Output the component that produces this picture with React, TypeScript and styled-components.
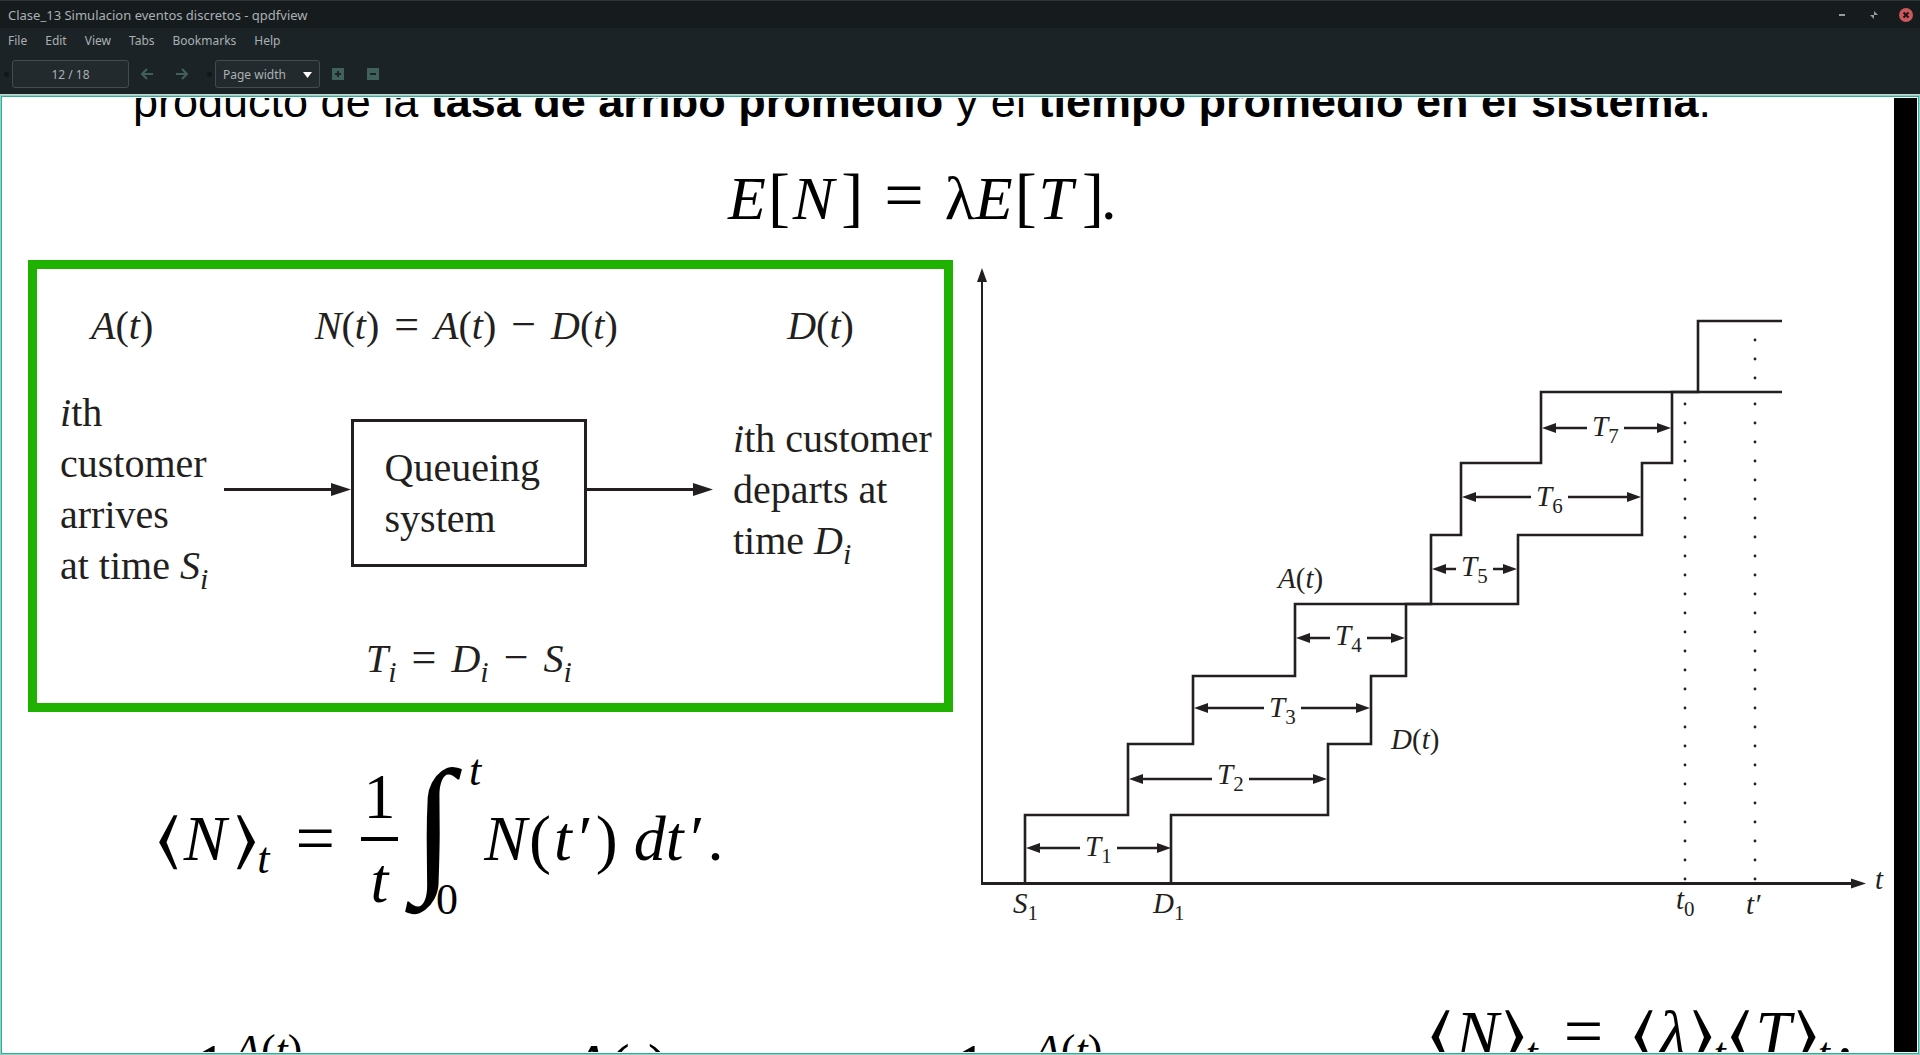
import React from "react";
import styled, { createGlobalStyle } from "styled-components";

const serif = '"Liberation Serif", "Times New Roman", serif';
const sans = '"Liberation Sans", Arial, sans-serif';
const ui = '"Noto Sans", sans-serif';
const ink = "#231f20";

const GlobalStyle = createGlobalStyle`
  *, *::before, *::after { box-sizing: border-box; }
  body { margin: 0; background: #1c2326; }
`;

/* ---------- window chrome ---------- */

const Window = styled.div`
  display: flex;
  flex-direction: column;
  height: 100vh;
  overflow: hidden;
  background: #1c2326;
  color: #a9b1b4;
  font-family: ${ui};
  font-size: 12px;
`;

const TitleBar = styled.header`
  display: flex;
  align-items: center;
  justify-content: space-between;
  height: 28px;
  padding: 0 7px 0 8px;
  border-top: 1px solid #2c3538;
  background: #161b1e;
`;

const Title = styled.h1`
  margin: 0;
  font-size: 13px;
  line-height: 26px;
  font-weight: 400;
`;

const WindowControls = styled.div`
  display: flex;
  align-items: center;
  gap: 18px;
`;

const IconButton = styled.button<{ $size: number }>`
  display: flex;
  align-items: center;
  justify-content: center;
  width: ${(p) => p.$size}px;
  height: ${(p) => p.$size}px;
  padding: 0;
  border: 0;
  background: transparent;
  color: #40605a;
`;

const MenuBar = styled.nav`
  display: flex;
  gap: 18px;
  height: 26px;
  padding: 0 8px;
`;

const MenuButton = styled.button`
  padding: 0;
  border: 0;
  background: transparent;
  color: inherit;
  font: inherit;
  line-height: 26px;
`;

const ToolBar = styled.div`
  display: flex;
  align-items: center;
  height: 40px;
  padding: 0 4px;
`;

const Grip = styled.span`
  width: 5px;
  height: 5px;
  margin-right: 3px;
  border-radius: 50%;
  background: #12171a;
`;

const PageField = styled.input`
  width: 117px;
  height: 28px;
  padding: 0;
  border: 1px solid #434b4e;
  border-radius: 3px;
  background: #232a2d;
  color: inherit;
  font: inherit;
  text-align: center;
`;

const NavGroup = styled.div`
  display: flex;
  gap: 11px;
  padding: 0 13px 0 6px;
`;

const ZoomGroup = styled(NavGroup)`
  padding: 0 6px;
`;

const SelectWrap = styled.div`
  position: relative;
`;

const ZoomSelect = styled.select`
  appearance: none;
  display: block;
  width: 105px;
  height: 28px;
  padding: 0 24px 0 7px;
  border: 1px solid #434b4e;
  border-radius: 3px;
  background: #232a2d;
  color: inherit;
  font: inherit;
`;

const SelectArrow = styled.svg`
  position: absolute;
  top: 12px;
  right: 8px;
  pointer-events: none;
`;

/* ---------- document view ---------- */

const ViewFrame = styled.main`
  flex: 1;
  min-height: 0;
  display: flex;
  border-top: 1px solid #cdd2d1;
`;

const ViewOuter = styled.div`
  flex: 1;
  display: flex;
  border: 1px solid #8fd3c6;
`;

const ViewInner = styled.div`
  flex: 1;
  display: flex;
  overflow: hidden;
  padding: 1px;
  border: 1px solid #33ab97;
  background: #fff;
`;

const PageClip = styled.div`
  flex: 1;
  display: flex;
  overflow: hidden;
`;

const Slide = styled.article`
  flex: 1;
  min-width: 0;
  margin-top: -22px;
  padding-left: 25px;
  color: #000;
  font-family: ${serif};
`;

const PageEdge = styled.div`
  width: 23px;
  background: #000;
`;

const Statement = styled.p`
  margin: 0;
  padding-left: 105px;
  font-family: ${sans};
  font-size: 45px;
  line-height: 52px;
  white-space: nowrap;
`;

const Formula = styled.div`
  display: flex;
  align-items: baseline;
  font-size: 64px;
  line-height: 72px;
  white-space: nowrap;
`;

const LittleLaw = styled(Formula)`
  padding: 34px 0 26px 700px;
  font-size: 62px;
`;

const Var = styled.i<{ $gap?: number }>`
  margin-left: ${(p) => p.$gap ?? 0}px;
`;

const Sym = styled.span<{ $gap?: number }>`
  margin-left: ${(p) => p.$gap ?? 0}px;
`;

const Bracket = styled(Sym)`
  font-size: 66px;
  line-height: 0;
`;

const Equals = styled.span<{ $wide?: boolean }>`
  margin: 0 ${(p) => (p.$wide ? 26 : 21)}px;
  font-size: 70px;
  line-height: 0;
`;

const Angle = styled(Sym)`
  font-family: "DejaVu Math TeX Gyre", "DejaVu Sans", sans-serif;
  line-height: 0;
`;

const Index = styled.sub`
  align-self: baseline;
  margin-left: -3px;
  font-size: 44px;
  font-style: italic;
  line-height: 0;
  vertical-align: -13px;
`;

const Columns = styled.div`
  display: grid;
  grid-template-columns: 925fr 941fr;
  align-items: start;
`;

const QueuePanel = styled.section`
  padding: 31px 0 18px;
  border: 9px solid #1fb200;
  color: ${ink};
  font-size: 40px;
  line-height: 52px;
  white-space: nowrap;
`;

const PanelHead = styled.div`
  display: grid;
  grid-template-columns: 224fr 473fr 157fr;
  padding-left: 54px;
`;

const PanelFlow = styled.div`
  display: flex;
  align-items: center;
  margin: 35px 0 42px;
  padding: 0 11px 0 23px;
  line-height: 51px;
`;

const PanelFoot = styled.div`
  padding-left: 329px;
`;

const Arrivals = styled.p`
  flex: 0 0 164px;
  margin: 0;
`;

const Departures = styled.p`
  flex: 0 0 200px;
  margin: 0 0 0 20px;
`;

const QueueBox = styled.div`
  flex: 0 0 236px;
  margin-top: 8px;
  padding: 20px 0 20px 31px;
  border: 3px solid ${ink};
`;

const FlowArrowBox = styled.div`
  flex: 1;
  display: flex;
  align-items: center;
`;

const FlowLine = styled.div`
  flex: 1;
  height: 3px;
  background: ${ink};
`;

const Op = styled.span`
  margin: 0 15px;
  font-size: 44px;
  line-height: 0;
`;

const Sub = styled.sub`
  font-size: 30px;
  font-style: italic;
  line-height: 0;
  vertical-align: -10px;
`;

const TimeAverage = styled.div`
  display: flex;
  align-items: center;
  margin-top: 37px;
  padding-left: 126px;
  font-size: 64px;
  line-height: 72px;
  white-space: nowrap;
`;

const Fraction = styled.div`
  display: flex;
  flex-direction: column;
  align-items: center;
  width: 37px;
  line-height: 64px;
`;

const Numerator = styled.span`
  padding-bottom: 8px;
`;

const Denominator = styled.i`
  width: 100%;
  padding-top: 8px;
  border-top: 4px solid #000;
  text-align: center;
`;

const IntegralSign = styled.i`
  margin-left: 15px;
  padding-bottom: 32px;
  font-size: 150px;
  line-height: 140px;
`;

const Limits = styled.span`
  display: flex;
  flex-direction: column;
  justify-content: space-between;
  height: 180px;
  margin-left: -18px;
  padding-bottom: 7px;
  font-size: 44px;
  line-height: 44px;
`;

const UpperLimit = styled.i`
  padding-left: 33px;
`;

const LastLine = styled.div`
  display: flex;
  align-items: flex-start;
  padding: 0 41px 0 167px;
`;

const Sums = styled(Formula)`
  flex: 1;
  padding-top: 91px;
`;

const Averages = styled(Formula)`
  padding-top: 58px;
`;

const Raised = styled.sup<{ $gap: number }>`
  position: relative;
  top: -23px;
  margin-left: ${(p) => p.$gap}px;
  font-size: 44px;
  line-height: 0;
`;

/* ---------- staircase chart ---------- */

const Chart = styled.svg`
  display: block;
  width: 100%;
  height: auto;
  font-family: ${serif};
  font-size: 29px;
  fill: ${ink};
`;

const Stair = styled.path`
  fill: none;
  stroke: ${ink};
  stroke-width: 2.6;
`;

const ChartSub = styled.tspan`
  font-size: 21px;
  font-style: normal;
`;

const ChartItalic = styled.text`
  font-style: italic;
`;

const ARRIVALS =
  "M1025 883V815H1128V744H1193V676H1295V604H1431V535H1461V463H1541V392H1698V321H1782";
const DEPARTURES =
  "M1171 883V815H1328V744H1371V676H1406V604H1518V535H1642V463H1672V392H1782";

type Span = { n: number; from: number; to: number; y: number; textX: number; base: number };

const SPANS: Span[] = [
  { n: 1, from: 1026, to: 1171, y: 848, textX: 1085, base: 856 },
  { n: 2, from: 1129, to: 1327, y: 779, textX: 1217, base: 784 },
  { n: 3, from: 1194, to: 1370, y: 708, textX: 1269, base: 717 },
  { n: 4, from: 1296, to: 1405, y: 638, textX: 1335, base: 645 },
  { n: 5, from: 1432, to: 1517, y: 569, textX: 1461, base: 576 },
  { n: 6, from: 1462, to: 1641, y: 497, textX: 1536, base: 506 },
  { n: 7, from: 1542, to: 1671, y: 428, textX: 1592, base: 436 },
];

const DOT_ROWS = Array.from({ length: 26 }, (_, k) => 404 + k * 19);

function ServiceSpan({ n, from, to, y, textX, base }: Span) {
  return (
    <g>
      <path
        d={`M${from} ${y}l14 -5v10zM${to} ${y}l-14 -5v10z`}
      />
      <path
        d={`M${from + 12} ${y}H${textX - 5}M${textX + 32} ${y}H${to - 12}`}
        stroke={ink}
        strokeWidth="2.6"
      />
      <ChartItalic x={textX} y={base}>
        T<ChartSub dy="7">{n}</ChartSub>
      </ChartItalic>
    </g>
  );
}

function StairChart() {
  return (
    <Chart viewBox="953 260 941 680" role="img" aria-label="A(t), D(t)">
      <path d="M982 884V280" stroke={ink} strokeWidth="2" />
      <path d="M982 268l5 14h-10z" />
      <path d="M981 883.5H1852" stroke={ink} strokeWidth="3" />
      <path d="M1866 883.5l-15 -5v10z" />
      <Stair d={ARRIVALS} />
      <Stair d={DEPARTURES} />
      {SPANS.map((s) => (
        <ServiceSpan key={s.n} {...s} />
      ))}
      {DOT_ROWS.map((y) => (
        <g key={y}>
          <circle cx="1685" cy={y} r="1.4" />
          <circle cx="1755" cy={y} r="1.4" />
        </g>
      ))}
      {[340, 359, 378].map((y) => (
        <circle key={y} cx="1755" cy={y} r="1.4" />
      ))}
      <text x="1278" y="588">
        <tspan fontStyle="italic">A</tspan>(<tspan fontStyle="italic">t</tspan>)
      </text>
      <text x="1391" y="749">
        <tspan fontStyle="italic">D</tspan>(<tspan fontStyle="italic">t</tspan>)
      </text>
      <ChartItalic x="1013" y="913">
        S<ChartSub dy="7">1</ChartSub>
      </ChartItalic>
      <ChartItalic x="1153" y="913">
        D<ChartSub dy="7">1</ChartSub>
      </ChartItalic>
      <ChartItalic x="1676" y="909">
        t<ChartSub dy="7">0</ChartSub>
      </ChartItalic>
      <ChartItalic x="1746" y="914">t′</ChartItalic>
      <ChartItalic x="1875" y="889">t</ChartItalic>
    </Chart>
  );
}

/* ---------- pieces ---------- */

function FlowArrow() {
  return (
    <FlowArrowBox>
      <FlowLine />
      <svg width="20" height="13" viewBox="0 0 20 13" fill={ink} aria-hidden="true">
        <path d="M0 0L20 6.5L0 13z" />
      </svg>
    </FlowArrowBox>
  );
}

function Of({ name }: { name: string }) {
  return (
    <span>
      <i>{name}</i>(<i>t</i>)
    </span>
  );
}

function TimeAvg({ close = 7, children }: { close?: number; children: React.ReactNode }) {
  return (
    <span>
      <Angle>⟨</Angle>
      <Var $gap={3}>{children}</Var>
      <Angle $gap={close}>⟩</Angle>
      <Index>t</Index>
    </span>
  );
}

export default function App() {
  return (
    <>
      <GlobalStyle />
      <Window>
        <TitleBar>
          <Title>Clase_13 Simulacion eventos discretos - qpdfview</Title>
          <WindowControls>
            <IconButton $size={14} aria-label="Minimize">
              <svg width="14" height="14" viewBox="0 0 14 14">
                <path d="M4 6h6v2H4z" fill="#969b9d" />
              </svg>
            </IconButton>
            <IconButton $size={14} aria-label="Restore">
              <svg width="14" height="14" viewBox="0 0 14 14" fill="#969b9d">
                <path d="M7 3v4h4zM3 7h4v4z" />
              </svg>
            </IconButton>
            <IconButton $size={14} aria-label="Close">
              <svg width="14" height="14" viewBox="0 0 14 14">
                <circle cx="7" cy="7" r="7" fill="#cc575d" />
                <path d="M4.5 4.5l5 5M9.5 4.5l-5 5" stroke="#1c1416" strokeWidth="2" />
              </svg>
            </IconButton>
          </WindowControls>
        </TitleBar>
        <MenuBar>
          {["File", "Edit", "View", "Tabs", "Bookmarks", "Help"].map((m) => (
            <MenuButton key={m}>{m}</MenuButton>
          ))}
        </MenuBar>
        <ToolBar>
          <Grip />
          <PageField aria-label="Page" defaultValue="12 / 18" />
          <NavGroup>
            <IconButton $size={24} aria-label="Previous page">
              <svg width="12" height="12" viewBox="0 0 12 12" fill="none" stroke="currentColor" strokeWidth="2">
                <path d="M12 6H1M6 1L1 6l5 5" />
              </svg>
            </IconButton>
            <IconButton $size={24} aria-label="Next page">
              <svg width="12" height="12" viewBox="0 0 12 12" fill="none" stroke="currentColor" strokeWidth="2">
                <path d="M0 6h11M6 1l5 5l-5 5" />
              </svg>
            </IconButton>
          </NavGroup>
          <Grip />
          <SelectWrap>
            <ZoomSelect aria-label="Zoom" defaultValue="Page width">
              <option>Page width</option>
            </ZoomSelect>
            <SelectArrow width="9" height="6" viewBox="0 0 9 6">
              <path d="M0 0h9L4.5 6z" fill="#fff" />
            </SelectArrow>
          </SelectWrap>
          <ZoomGroup>
            <IconButton $size={24} aria-label="Zoom in">
              <svg width="12" height="12" viewBox="0 0 12 12">
                <path d="M0 0h12v12H0z" fill="currentColor" />
                <path d="M3 6h6M6 3v6" stroke="#1c2326" strokeWidth="2" />
              </svg>
            </IconButton>
            <IconButton $size={24} aria-label="Zoom out">
              <svg width="12" height="12" viewBox="0 0 12 12">
                <path d="M0 0h12v12H0z" fill="currentColor" />
                <path d="M3 6h6" stroke="#1c2326" strokeWidth="2" />
              </svg>
            </IconButton>
          </ZoomGroup>
        </ToolBar>
        <ViewFrame>
          <ViewOuter>
            <ViewInner>
              <PageClip>
                <Slide>
                  <Statement>
                    producto de la <b>tasa de arribo promedio</b> y el{" "}
                    <b>tiempo promedio en el sistema</b>.
                  </Statement>
                  <LittleLaw>
                    <Var>E</Var>
                    <Bracket $gap={2}>[</Bracket>
                    <Var $gap={3}>N</Var>
                    <Bracket $gap={7}>]</Bracket>
                    <Equals>=</Equals>
                    <Sym>λ</Sym>
                    <Var>E</Var>
                    <Bracket $gap={2}>[</Bracket>
                    <Var $gap={2}>T</Var>
                    <Bracket $gap={9}>]</Bracket>
                    <Sym $gap={-3}>.</Sym>
                  </LittleLaw>
                  <Columns>
                    <div>
                      <QueuePanel>
                        <PanelHead>
                          <Of name="A" />
                          <span>
                            <Of name="N" />
                            <Op>=</Op>
                            <Of name="A" />
                            <Op>−</Op>
                            <Of name="D" />
                          </span>
                          <Of name="D" />
                        </PanelHead>
                        <PanelFlow>
                          <Arrivals>
                            <i>i</i>th
                            <br />
                            customer
                            <br />
                            arrives
                            <br />
                            at time <i>S</i>
                            <Sub>i</Sub>
                          </Arrivals>
                          <FlowArrow />
                          <QueueBox>
                            Queueing
                            <br />
                            system
                          </QueueBox>
                          <FlowArrow />
                          <Departures>
                            <i>i</i>th customer
                            <br />
                            departs at
                            <br />
                            time <i>D</i>
                            <Sub>i</Sub>
                          </Departures>
                        </PanelFlow>
                        <PanelFoot>
                          <i>T</i>
                          <Sub>i</Sub>
                          <Op>=</Op>
                          <i>D</i>
                          <Sub>i</Sub>
                          <Op>−</Op>
                          <i>S</i>
                          <Sub>i</Sub>
                        </PanelFoot>
                      </QueuePanel>
                      <TimeAverage>
                        <TimeAvg>N</TimeAvg>
                        <Equals $wide>=</Equals>
                        <Fraction>
                          <Numerator>1</Numerator>
                          <Denominator>t</Denominator>
                        </Fraction>
                        <IntegralSign>∫</IntegralSign>
                        <Limits>
                          <UpperLimit>t</UpperLimit>
                          <span>0</span>
                        </Limits>
                        <Var $gap={3}>N</Var>
                        <Bracket $gap={2}>(</Bracket>
                        <Var $gap={3}>t</Var>
                        <Var $gap={3}>′</Var>
                        <Bracket $gap={7}>)</Bracket>
                        <Var $gap={16}>dt</Var>
                        <Var $gap={3}>′</Var>
                        <Sym $gap={7}>.</Sym>
                      </TimeAverage>
                    </div>
                    <StairChart />
                  </Columns>
                  <LastLine>
                    <Sums>
                      <Sym>1</Sym>
                      <Raised $gap={7}>
                        <Of name="A" />
                      </Raised>
                      <Sym $gap={267}>
                        <Of name="A" />
                      </Sym>
                      <Sym $gap={286}>1</Sym>
                      <Raised $gap={47}>
                        <Of name="A" />
                      </Raised>
                    </Sums>
                    <Averages>
                      <TimeAvg close={3}>N</TimeAvg>
                      <Equals $wide>=</Equals>
                      <TimeAvg close={3}>λ</TimeAvg>
                      <TimeAvg close={3}>T</TimeAvg>
                      <Sym $gap={7}>.</Sym>
                    </Averages>
                  </LastLine>
                </Slide>
                <PageEdge />
              </PageClip>
            </ViewInner>
          </ViewOuter>
        </ViewFrame>
      </Window>
    </>
  );
}
